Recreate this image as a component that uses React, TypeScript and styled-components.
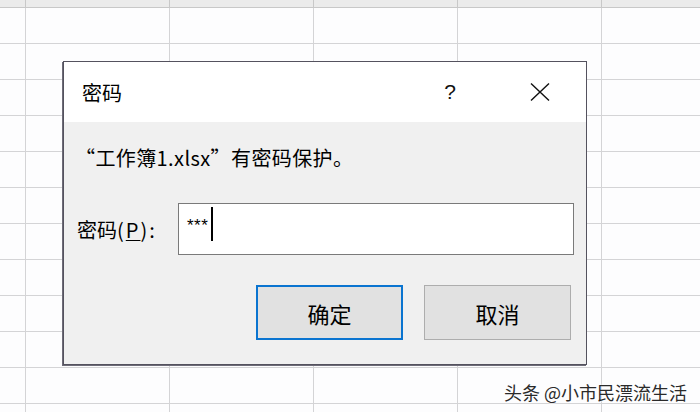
import * as React from "react";
import styled, { createGlobalStyle } from "styled-components";

const GlobalStyle = createGlobalStyle`
  html, body {
    margin: 0;
    padding: 0;
  }
  body {
    width: 700px;
    height: 412px;
    overflow: hidden;
    background: #fdfdfe;
    font-family: "Noto Sans CJK SC", "Noto Sans", sans-serif;
  }
`;

const columns = ["H", "I", "J", "K", "L"];
const rowCount = 12;

const App = () => {
  return (
    <>
      <GlobalStyle />
      <S.Sheet>
        <S.HeaderRow>
          <S.HeaderCell $first />
          {columns.map((c) => (
            <S.HeaderCell key={c}>{c}</S.HeaderCell>
          ))}
        </S.HeaderRow>
        {Array.from({ length: rowCount }).map((_, i) => (
          <S.Row key={i}>
            <S.Cell $first />
            {columns.map((c) => (
              <S.Cell key={c} />
            ))}
          </S.Row>
        ))}

        {/* password dialog */}
        <S.Dialog>
          <S.TitleBar>
            <S.Title>密码</S.Title>
            <S.HelpButton>?</S.HelpButton>
            <S.CloseButton>
              <svg width="20" height="18" viewBox="0 0 20 18">
                <path d="M1 0.5 L19 17.5 M19 0.5 L1 17.5" stroke="#111" strokeWidth="1.4" fill="none" />
              </svg>
            </S.CloseButton>
          </S.TitleBar>
          <S.Body>
            <S.Message>“工作簿1.xlsx”有密码保护。</S.Message>
            <S.FieldRow>
              <S.Label>
                密码<S.Mnemonic>(<u>P</u>):</S.Mnemonic>
              </S.Label>
              <S.PasswordBox>
                <S.Masked>***</S.Masked>
                <S.Caret />
              </S.PasswordBox>
            </S.FieldRow>
            <S.ButtonRow>
              <S.Button $focused>确定</S.Button>
              <S.Button>取消</S.Button>
            </S.ButtonRow>
          </S.Body>
        </S.Dialog>

        <S.Watermark>头条 @小市民漂流生活</S.Watermark>
      </S.Sheet>
    </>
  );
};

const S = {
  Sheet: styled.div`
    position: relative;
    width: 700px;
    height: 412px;
    overflow: hidden;
    background: #fdfdfe;
  `,
  HeaderRow: styled.div`
    display: flex;
    height: 8px;
    overflow: hidden;
    background: #ebebeb;
    border-bottom: 1px solid #c8c8c8;
    box-sizing: border-box;
  `,
  HeaderCell: styled.div<{ $first?: boolean }>`
    flex: 0 0 ${(p) => (p.$first ? "26px" : "144px")};
    box-sizing: border-box;
    border-right: 1px solid #c8c8c8;
    display: flex;
    align-items: flex-end;
    justify-content: center;
    padding-bottom: 4px;
    font-family: "Liberation Sans", Arial, sans-serif;
    font-weight: bold;
    font-size: 16px;
    line-height: 16px;
    color: #222;
  `,
  Row: styled.div`
    display: flex;
    height: 36px;
    box-sizing: border-box;
    border-bottom: 1px solid #d4d4d6;
  `,
  Cell: styled.div<{ $first?: boolean }>`
    flex: 0 0 ${(p) => (p.$first ? "26px" : "144px")};
    box-sizing: border-box;
    border-right: 1px solid #d4d4d6;
  `,
  Dialog: styled.div`
    position: absolute;
    left: 63px;
    top: 61px;
    width: 524px;
    height: 304px;
    box-sizing: border-box;
    border: 1px solid #54525e;
    box-shadow: -1px 1px 0 #6e6c78;
    display: flex;
    flex-direction: column;
    background: #f0f0f0;
  `,
  TitleBar: styled.div`
    height: 60px;
    flex: 0 0 60px;
    background: #fff;
    display: flex;
    align-items: center;
    padding: 0 26px 0 18px;
  `,
  Title: styled.div`
    flex: 1;
    font-size: 20px;
    color: #000;
  `,
  HelpButton: styled.div`
    width: 40px;
    text-align: center;
    font-family: "Liberation Sans", Arial, sans-serif;
    font-size: 21px;
    color: #111;
    margin-right: 50px;
  `,
  CloseButton: styled.div`
    width: 40px;
    display: flex;
    justify-content: center;
    align-items: center;
  `,
  Body: styled.div`
    flex: 1;
    display: flex;
    flex-direction: column;
    padding: 24px 12px 0 11px;
  `,
  Message: styled.div`
    font-size: 20px;
    line-height: 24px;
    letter-spacing: 0.4px;
    color: #000;
  `,
  FieldRow: styled.div`
    display: flex;
    align-items: center;
    margin-top: 33px;
  `,
  Label: styled.div`
    width: 103px;
    padding-left: 2px;
    box-sizing: border-box;
    font-size: 20px;
    color: #000;

    u {
      text-decoration-thickness: 1px;
      text-underline-offset: 2px;
    }
  `,
  Mnemonic: styled.span`
    letter-spacing: 2px;
  `,
  PasswordBox: styled.div`
    flex: 1;
    height: 52px;
    box-sizing: border-box;
    border: 1px solid #7a7a7a;
    background: #fff;
    display: flex;
    align-items: flex-start;
    padding: 3px 0 0 8px;
  `,
  Masked: styled.span`
    font-family: "Liberation Sans", Arial, sans-serif;
    font-size: 17px;
    line-height: 20px;
    margin-top: 9px;
    color: #000;
    letter-spacing: 0.5px;
  `,
  Caret: styled.span`
    width: 2px;
    height: 34px;
    margin-left: 3px;
    background: #000;
  `,
  ButtonRow: styled.div`
    display: flex;
    justify-content: flex-end;
    gap: 21px;
    margin-top: 30px;
    padding-right: 3px;
  `,
  Button: styled.div<{ $focused?: boolean }>`
    width: 147px;
    height: 55px;
    box-sizing: border-box;
    display: flex;
    align-items: center;
    justify-content: center;
    background: #e1e1e1;
    border: ${(p) => (p.$focused ? "2px solid #0a74d0" : "1px solid #adadad")};
    font-size: 22px;
    color: #000;
  `,
  Watermark: styled.div`
    position: absolute;
    right: 13px;
    bottom: 8px;
    font-size: 18px;
    line-height: 24px;
    color: #2a2a2a;
    text-shadow: 0 0 2px #fff, 0 0 2px #fff;
  `,
};

export default App;
